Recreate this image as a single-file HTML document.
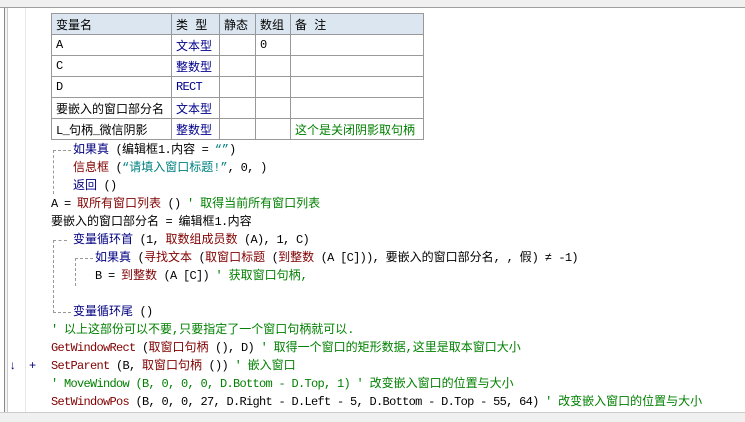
<!DOCTYPE html><html><head><meta charset="utf-8"><style>
*{margin:0;padding:0;box-sizing:border-box}
body{width:745px;height:422px;overflow:hidden;background:#fff;font-family:"Liberation Mono","Noto Sans CJK SC",monospace;font-size:12px;position:relative}
i{font-style:normal;font-size:12px;letter-spacing:-0.7px}
.top{position:absolute;left:0;top:0;width:745px;height:8px;background:#f0f0f0;border-bottom:1px solid #a0a0a0}
.lb{position:absolute;left:4px;top:8px;width:4px;height:404px;border-left:1px solid #888;border-right:1px solid #ccc;background:#f4f4f4}
.gut{position:absolute;left:25px;top:8px;width:1px;height:404px;background:#e8e8e8}
.bot{position:absolute;left:0;top:412px;width:745px;height:10px;background:#f0f0f0;border-top:1px solid #ccc}
table{position:absolute;left:51px;top:13px;border-collapse:collapse}
td{border:1px solid #999;height:21px;padding:0 4px;font-size:12px;white-space:nowrap}
tr.h td{background:#dce6f1}
.t{color:#00008b}.g{color:#008000}.n{color:#000080}.r{color:#800000}.s{color:#008080}
.l{position:absolute;white-space:nowrap;line-height:18px;height:18px}
.dv{position:absolute;border-left:1px dashed #999;width:0}
.dh{position:absolute;border-top:1px dashed #999;height:0}
</style></head><body>
<div class="top"></div><div class="lb"></div><div class="gut"></div>
<table>
<tr class="h"><td style="width:120px">变量名</td><td style="width:48px">类 型</td><td style="width:36px">静态</td><td style="width:35px">数组</td><td style="width:133px">备 注</td></tr>
<tr><td><i>A</i></td><td class="t">文本型</td><td></td><td><i>0</i></td><td></td></tr>
<tr><td><i>C</i></td><td class="t">整数型</td><td></td><td></td><td></td></tr>
<tr><td><i>D</i></td><td class="t"><i>RECT</i></td><td></td><td></td><td></td></tr>
<tr><td>要嵌入的窗口部分名</td><td class="t">文本型</td><td></td><td></td><td></td></tr>
<tr><td><i>L_</i>句柄<i>_</i>微信阴影</td><td class="t">整数型</td><td></td><td></td><td class="g">这个是关闭阴影取句柄</td></tr>
</table>
<div class="dh" style="left:53px;top:150px;width:18px"></div><div class="dv" style="left:53px;top:150px;height:44px"></div>
<div class="dh" style="left:53px;top:240px;width:14px"></div><div class="dv" style="left:53px;top:240px;height:73px"></div><div class="dh" style="left:53px;top:312px;width:18px"></div>
<div class="dh" style="left:75px;top:258px;width:18px"></div><div class="dv" style="left:75px;top:258px;height:28px"></div>
<div class="l" style="left:73px;top:141px"><span class="n">如果真</span><i> (</i>编辑框<i>1.</i>内容<i> = </i><span class="s">“”</span><i>)</i></div>
<div class="l" style="left:73px;top:159px"><span class="r">信息框</span><i> (</i><span class="s">“请填入窗口标题!”</span><i>, 0, )</i></div>
<div class="l" style="left:73px;top:177px"><span class="n">返回</span><i> ()</i></div>
<div class="l" style="left:51px;top:195px"><i>A = </i><span class="r">取所有窗口列表</span><i> () </i><span class="g"><i>' </i>取得当前所有窗口列表</span></div>
<div class="l" style="left:51px;top:213px">要嵌入的窗口部分名<i> = </i>编辑框<i>1.</i>内容</div>
<div class="l" style="left:73px;top:231px"><span class="n">变量循环首</span><i> (1, </i><span class="r">取数组成员数</span><i> (A), 1, C)</i></div>
<div class="l" style="left:95px;top:249px"><span class="n">如果真</span><i> (</i><span class="r">寻找文本</span><i> (</i><span class="r">取窗口标题</span><i> (</i><span class="r">到整数</span><i> (A [C])), </i>要嵌入的窗口部分名<i>, , </i>假<i>) </i>≠<i> -1)</i></div>
<div class="l" style="left:95px;top:267px"><i>B = </i><span class="r">到整数</span><i> (A [C]) </i><span class="g"><i>' </i>获取窗口句柄,</span></div>
<div class="l" style="left:73px;top:303px"><span class="n">变量循环尾</span><i> ()</i></div>
<div class="l g" style="left:51px;top:321px"><i>' </i>以上这部份可以不要,只要指定了一个窗口句柄就可以.</div>
<div class="l" style="left:51px;top:339px"><span class="r"><i>GetWindowRect</i></span><i> (</i><span class="r">取窗口句柄</span><i> (), D) </i><span class="g"><i>' </i>取得一个窗口的矩形数据,这里是取本窗口大小</span></div>
<div class="l n" style="left:9px;top:357px;font-weight:bold">↓</div><div class="l n" style="left:29px;top:357px">+</div>
<div class="l" style="left:51px;top:357px"><span class="r"><i>SetParent</i></span><i> (B, </i><span class="r">取窗口句柄</span><i> ()) </i><span class="g"><i>' </i>嵌入窗口</span></div>
<div class="l g" style="left:51px;top:375px"><i>' MoveWindow (B, 0, 0, 0, D.Bottom - D.Top, 1) ' </i>改变嵌入窗口的位置与大小</div>
<div class="l" style="left:51px;top:393px"><span class="r"><i>SetWindowPos</i></span><i> (B, 0, 0, 27, D.Right - D.Left - 5, D.Bottom - D.Top - 55, 64) </i><span class="g"><i>' </i>改变嵌入窗口的位置与大小</span></div>
<div class="bot"></div>
</body></html>
